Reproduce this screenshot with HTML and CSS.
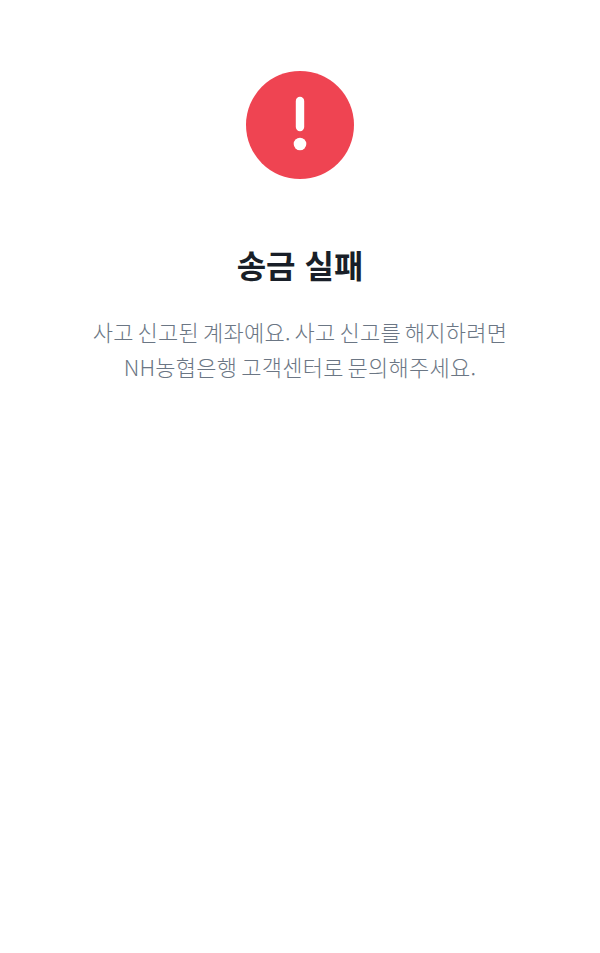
FILE: index.html
```html
<!DOCTYPE html>
<html lang="ko">
<head>
    <meta charset="UTF-8">
    <meta name="viewport" content="width=device-width, initial-scale=1.0">
    <title>송금 실패</title>
    <link rel="stylesheet" href="styles.css">
</head>
<body>
    <div class="result">
        <div class="result-icon">
            <svg width="108" height="108" viewBox="0 0 108 108">
                <circle cx="54" cy="54" r="54" fill="#ef4452"/>
                <path d="M54 30v26" stroke="#fff" stroke-width="8.4" stroke-linecap="round" fill="none"/>
                <circle cx="54" cy="73" r="6.3" fill="#fff"/>
            </svg>
        </div>
        <h1 class="result-title">송금 실패</h1>
        <p class="result-text">사고 신고된 계좌예요. 사고 신고를 해지하려면<br>NH농협은행 고객센터로 문의해주세요.</p>
    </div>
</body>
</html>
```

FILE: styles.css
```css
body {
    margin: 0;
    background-color: #fff;
    font-family: "Noto Sans CJK KR", "Noto Sans", sans-serif;
}

.result {
    display: flex;
    flex-direction: column;
    align-items: center;
    padding-top: 71px;
}

.result-icon {
    height: 108px;
}

.result-icon svg {
    display: block;
}

.result-title {
    margin: 60px 0 0;
    font-size: 32px;
    line-height: 50px;
    font-weight: 700;
    color: #191f28;
}

.result-text {
    margin: 25px 0 0;
    font-size: 22px;
    line-height: 35px;
    font-weight: 300;
    letter-spacing: 0.25px;
    word-spacing: -2.5px;
    color: #6b7684;
    text-align: center;
}
```
